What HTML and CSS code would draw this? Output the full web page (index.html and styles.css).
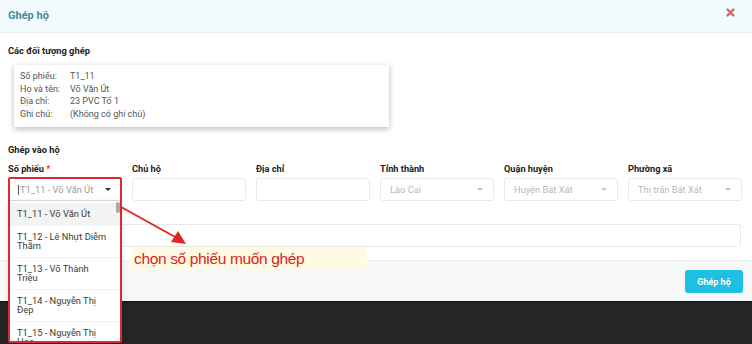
FILE: index.html
```html
<!DOCTYPE html>
<html lang="vi">
<head>
<meta charset="utf-8">
<title>Ghép hộ</title>
<link rel="stylesheet" href="styles.css">
</head>
<body>
<div class="modal">
  <div class="modal-header">
    <h1 class="modal-title">Ghép hộ</h1>
    <button class="close-btn" aria-label="Đóng">
      <svg width="9" height="9" viewBox="0 0 9 9"><path d="M1.5 1.5 L7.5 7.5 M7.5 1.5 L1.5 7.5" stroke="#e8574b" stroke-width="2.2" stroke-linecap="round"/></svg>
    </button>
  </div>
  <div class="modal-body">
    <h2 class="section-title">Các đối tượng ghép</h2>
    <div class="info-card">
      <div class="info-row"><span class="info-label">Số phiếu:</span><span>T1_11</span></div>
      <div class="info-row"><span class="info-label">Họ và tên:</span><span>Võ Văn Út</span></div>
      <div class="info-row"><span class="info-label">Địa chỉ:</span><span>23 PVC Tổ 1</span></div>
      <div class="info-row"><span class="info-label">Ghi chú:</span><span>(Không có ghi chú)</span></div>
    </div>
    <h2 class="section-title second">Ghép vào hộ</h2>
    <div class="form-grid">
      <div class="field">
        <label class="field-label">Số phiếu <span class="req">*</span></label>
        <div class="select active"><span class="cursor"></span><span class="ph">T1_11 - Võ Văn Út</span><span class="caret dark"></span></div>
      </div>
      <div class="field">
        <label class="field-label">Chủ hộ</label>
        <div class="input"></div>
      </div>
      <div class="field">
        <label class="field-label">Địa chỉ</label>
        <div class="input"></div>
      </div>
      <div class="field">
        <label class="field-label">Tỉnh thành</label>
        <div class="select disabled"><span class="ph">Lào Cai</span><span class="caret"></span></div>
      </div>
      <div class="field">
        <label class="field-label">Quận huyện</label>
        <div class="select disabled"><span class="ph">Huyện Bát Xát</span><span class="caret"></span></div>
      </div>
      <div class="field">
        <label class="field-label">Phường xã</label>
        <div class="select disabled"><span class="ph">Thị trấn Bát Xát</span><span class="caret"></span></div>
      </div>
    </div>
    <div class="input wide"></div>
  </div>
  <div class="modal-footer">
    <button class="btn-primary">Ghép hộ</button>
  </div>

  <ul class="dropdown">
    <li class="opt hover">T1_11 - Võ Văn Út</li>
    <li class="opt">T1_12 - Lê Nhựt Diễm Thắm</li>
    <li class="opt">T1_13 - Võ Thành Triệu</li>
    <li class="opt">T1_14 - Nguyễn Thị Đẹp</li>
    <li class="opt">T1_15 - Nguyễn Thị Hoa</li>
    <li class="thumb"></li>
  </ul>
  <div class="red-box"></div>
  <svg class="arrow" width="80" height="50" viewBox="0 0 80 50">
    <line x1="1" y1="2" x2="57" y2="33" stroke="#e1262a" stroke-width="2"/>
    <polygon points="66,39 51,37 58,26" fill="#e1262a"/>
  </svg>
  <div class="note">chọn số phiếu muốn ghép</div>
</div>
<div class="backdrop"></div>
</body>
</html>
```
FILE: styles.css
```css
* { box-sizing: border-box; }
html, body { margin: 0; padding: 0; }
body {
  width: 752px;
  height: 344px;
  overflow: hidden;
  background: #252525;
  font-family: Roboto, "Noto Sans", Arial, sans-serif;
  color: #333;
}
.modal {
  position: relative;
  background: #fff;
  box-shadow: 0 1px 2px rgba(0,0,0,.5);
}
.modal-header {
  height: 33px;
  background: #f2fcfe;
  border-bottom: 1px solid #e5eef1;
  display: flex;
  align-items: center;
  justify-content: space-between;
  padding: 0 17px 2px 8px;
}
.modal-title {
  margin: 0;
  font-size: 11px;
  font-weight: 700;
  color: #4a8a9b;
}
.close-btn {
  border: 0;
  background: none;
  padding: 0;
  display: flex;
  margin-top: -6px;
}
.modal-body {
  padding: 11px 11px 13px 8px;
}
.section-title {
  margin: 0;
  font-size: 9.3px;
  font-weight: 700;
  line-height: 13px;
  color: #222;
}
.section-title.second { margin-top: 16px; }
.info-card {
  margin: 8px 0 0 6px;
  width: 375px;
  height: 62px;
  padding: 5px 6px;
  box-shadow: 0 2px 6px rgba(0,0,0,.28);
  font-size: 9px;
  color: #555;
}
.info-row { display: flex; line-height: 12.5px; }
.info-label { width: 50px; }
.form-grid {
  margin-top: 6px;
  display: grid;
  grid-template-columns: repeat(6, 114px);
  column-gap: 10px;
}
.field { display: flex; flex-direction: column; }
.field-label {
  font-size: 9.2px;
  font-weight: 700;
  line-height: 13px;
  color: #222;
  margin-bottom: 3px;
}
.req { color: #e53935; }
.input, .select {
  height: 23px;
  border: 1px solid #e9e9e9;
  border-radius: 3px;
  background: #fff;
}
.select {
  display: flex;
  align-items: center;
  padding: 0 10px 0 9px;
  font-size: 9.3px;
  color: #b7b7b7;
}
.select .ph { flex: 1; white-space: nowrap; overflow: hidden; }
.select.active { color: #9a9a9a; border-color: #ddd; }
.cursor { width: 1px; height: 10px; background: #555; margin-right: 1px; }
.caret {
  width: 0; height: 0;
  border-left: 3px solid transparent;
  border-right: 3px solid transparent;
  border-top: 3px solid #c4c4c4;
}
.caret.dark { border-top-color: #333; }
.input.wide { margin-top: 23px; width: 733px; }
.modal-footer {
  height: 41px;
  background: #f7f8fa;
  border-top: 1px solid #eef0f2;
  display: flex;
  justify-content: flex-end;
  align-items: flex-start;
  padding: 9px 9px 0 0;
}
.btn-primary {
  width: 58px;
  height: 23px;
  border: 0;
  border-radius: 3px;
  background: #1dbfe2;
  color: #fff;
  font-family: Roboto, Arial, sans-serif;
  font-size: 9px;
  font-weight: 700;
}
.backdrop { height: 43px; }

/* overlays */
.dropdown {
  position: absolute;
  left: 9px;
  top: 201px;
  width: 112px;
  height: 141px;
  margin: 0;
  padding: 2px 0 0;
  list-style: none;
  background: #fff;
  overflow: hidden;
  z-index: 2;
  box-shadow: 0 2px 6px rgba(0,0,0,.15);
}
.opt {
  padding: 6px 14px 6px 8px;
  font-size: 9.3px;
  line-height: 9.5px;
  color: #3a3a3a;
  border-bottom: 1px solid #f1f1f1;
  min-height: 32px;
}
.opt.hover { background: #f3f3f3; min-height: 22px; padding-top: 6px; }
.thumb {
  position: absolute;
  right: 1px;
  top: 1px;
  width: 4px;
  height: 11px;
  border-radius: 2px;
  background: #a9a9a9;
}
.red-box {
  position: absolute;
  left: 8px;
  top: 177px;
  width: 114px;
  height: 166px;
  border: 2px solid #dc2b2f;
  border-radius: 2px;
  z-index: 3;
}
.arrow {
  position: absolute;
  left: 120px;
  top: 205px;
  z-index: 3;
}
.note {
  position: absolute;
  left: 132px;
  top: 247px;
  width: 235px;
  height: 23px;
  padding-left: 2px;
  background: #fffbe3;
  color: #e0201c;
  font-family: "Liberation Sans", Arial, sans-serif;
  font-size: 15.5px;
  letter-spacing: -0.35px;
  line-height: 23px;
  z-index: 3;
}
```
